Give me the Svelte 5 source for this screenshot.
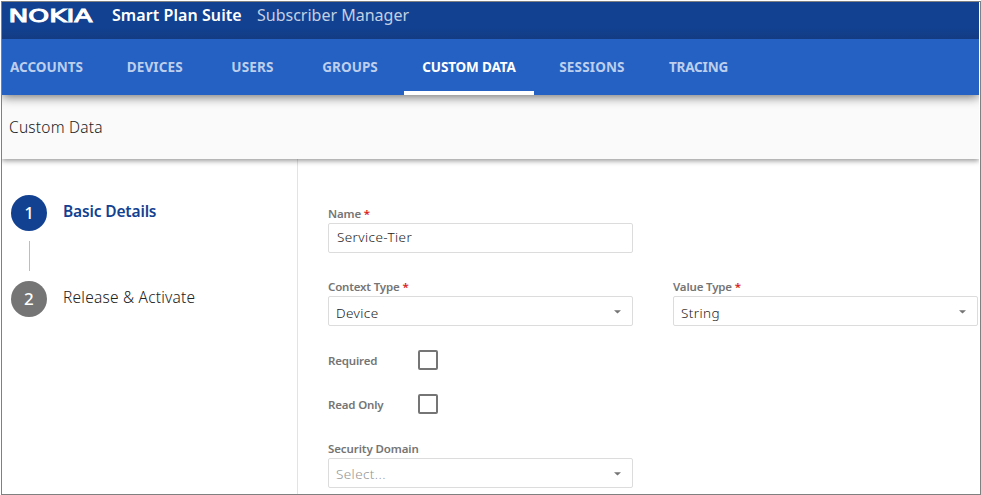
<script>
  const tabs = [
    { label: 'ACCOUNTS', width: 98.5, spacing: 0 },
    { label: 'DEVICES', width: 108.5, spacing: 0.15 },
    { label: 'USERS', width: 87, spacing: 0.2 },
    { label: 'GROUPS', width: 108, spacing: 0.05 },
    { label: 'CUSTOM DATA', width: 130, spacing: -0.15, active: true },
    { label: 'SESSIONS', width: 116, spacing: 0.15 },
    { label: 'TRACING', width: 97, spacing: -0.2 }
  ];
</script>

{#snippet arrow()}
  <svg class="arrow" width="7" height="4" viewBox="0 0 7 4"><path d="M0 0.3H7L3.5 3.6Z" fill="#757575" /></svg>
{/snippet}

<div class="page">
  <header>
    <svg class="logo" width="86" height="28" viewBox="0 0 86 28" role="img" aria-label="NOKIA">
      <text x="-0.5" y="19.5" textLength="84" lengthAdjust="spacingAndGlyphs">NOKIA</text>
    </svg>
    <span class="suite">Smart Plan Suite</span>
    <span class="product">Subscriber Manager</span>
  </header>
  <nav>
    {#each tabs as tab}
      <div class="tab" class:active={tab.active} style="width: {tab.width}px; letter-spacing: {tab.spacing}px"><span>{tab.label}</span></div>
    {/each}
  </nav>
  <div class="title"><span>Custom Data</span></div>
  <main>
    <aside>
      <div class="step current"><b>1</b><span>Basic Details</span></div>
      <div class="line"></div>
      <div class="step"><b>2</b><span>Release &amp; Activate</span></div>
    </aside>
    <form>
      <div class="field name">
        <div class="label"><span>Name</span> <i>*</i></div>
        <div class="box"><span>Service-Tier</span></div>
      </div>
      <div class="row">
        <div class="field">
          <div class="label"><span>Context Type</span> <i>*</i></div>
          <div class="box select"><span>Device</span>{@render arrow()}</div>
        </div>
        <div class="field">
          <div class="label"><span>Value Type</span> <i>*</i></div>
          <div class="box select"><span>String</span>{@render arrow()}</div>
        </div>
      </div>
      <div class="check"><div class="label">Required</div><div class="tick"></div></div>
      <div class="check"><div class="label">Read Only</div><div class="tick"></div></div>
      <div class="field security">
        <div class="label wide">Security Domain</div>
        <div class="box select placeholder"><span>Select...</span>{@render arrow()}</div>
      </div>
    </form>
  </main>
</div>

<style>
  :global(body) { background: #fff; overflow: hidden; }
  .page {
    box-sizing: border-box;
    width: 980px;
    height: 494px;
    margin: 1px 0 0 1px;
    border: 1px solid #808080;
    padding-right: 1px;
    display: flex;
    flex-direction: column;
    font-family: "Noto Sans", "Open Sans", sans-serif;
    color: #222;
    white-space: nowrap;
  }
  header {
    flex: 0 0 37px;
    display: flex;
    align-items: flex-start;
    padding-left: 7px;
    background: linear-gradient(#124191 0, #124191 70%, #133b82 100%);
    color: #fff;
    line-height: 27px;
  }
  .logo { flex: none; }
  .logo text {
    font: 17.5px "DejaVu Sans", sans-serif;
    fill: #fff;
    stroke: #fff;
    stroke-width: 1;
  }
  .suite { margin-left: 17px; width: 145px; font-size: 16px; font-weight: 600; letter-spacing: 0.07px; }
  .product { font-size: 16px; color: #c4d0e3; }
  nav {
    flex: 0 0 56px;
    display: flex;
    background: #2461c2;
    box-shadow: 0 2px 10px rgba(0, 0, 0, 0.55);
    clip-path: inset(0 0 -14px 0);
    z-index: 1;
  }
  .tab {
    flex: none;
    box-sizing: border-box;
    height: 56px;
    border-bottom: 4px solid transparent;
    line-height: 56px;
    text-align: center;
    font-size: 13.5px;
    font-weight: 700;
    color: #bdcfed;
  }
  .tab:first-child { text-align: left; padding-left: 8px; }
  .tab.active { color: #fff; border-color: #fff; }
  .title {
    flex: 0 0 64px;
    box-sizing: border-box;
    padding-left: 7px;
    line-height: 64px;
    font-size: 15.5px;
    font-weight: 300;
    letter-spacing: 0.22px;
    background: #fafafa;
    box-shadow: 0 2px 5px rgba(0, 0, 0, 0.4);
    clip-path: inset(0 0 -8px 0);
  }
  main { flex: 1; display: flex; min-height: 0; }
  aside {
    flex: 0 0 296px;
    box-sizing: border-box;
    padding: 36px 0 0 9px;
    border-right: 1px solid #e3e3e3;
  }
  .step { display: flex; height: 36px; font-size: 15.5px; font-weight: 300; letter-spacing: 0.22px; }
  .step b {
    width: 36px;
    height: 36px;
    border-radius: 50%;
    margin-right: 16px;
    background: #757575;
    color: #fff;
    line-height: 36px;
    text-align: center;
    font-size: 17px;
    font-weight: 500;
  }
  .step span { line-height: 33px; }
  .step.current { color: #124191; font-weight: 600; letter-spacing: -0.15px; }
  .step.current b { background: #124191; }
  .line { width: 1px; height: 30px; margin: 10px 0 10px 18px; background: #bdbdbd; }
  form { flex: 1; padding: 48px 0 0 30px; }
  .field { width: 305px; }
  .label {
    height: 16px;
    line-height: 13px;
    font-size: 11.5px;
    font-weight: 600;
    letter-spacing: -0.17px;
    color: #757575;
  }
  .label.wide { letter-spacing: -0.1px; }
  .label i { color: #d9221c; font-style: normal; }
  .box {
    box-sizing: border-box;
    height: 30px;
    padding: 0 11px 0 8px;
    display: flex;
    justify-content: space-between;
    border: 1px solid #dcdcdc;
    border-radius: 2px;
    line-height: 27px;
    font-size: 13.5px;
    font-weight: 300;
    letter-spacing: 0.4px;
  }
  .select { padding-left: 7px; line-height: 33px; }
  .placeholder { color: #949494; line-height: 31px; }
  .arrow { margin-top: 13px; flex: none; }
  .name { margin-bottom: 27px; }
  .row { display: flex; gap: 40px; margin-bottom: 24px; }
  .check { display: flex; height: 20px; margin-bottom: 24px; }
  .check .label { width: 90px; line-height: 21px; }
  .tick { box-sizing: border-box; width: 20px; height: 20px; border: 2px solid #757575; border-radius: 2px; }
  .security { padding-top: 4px; }
</style>
